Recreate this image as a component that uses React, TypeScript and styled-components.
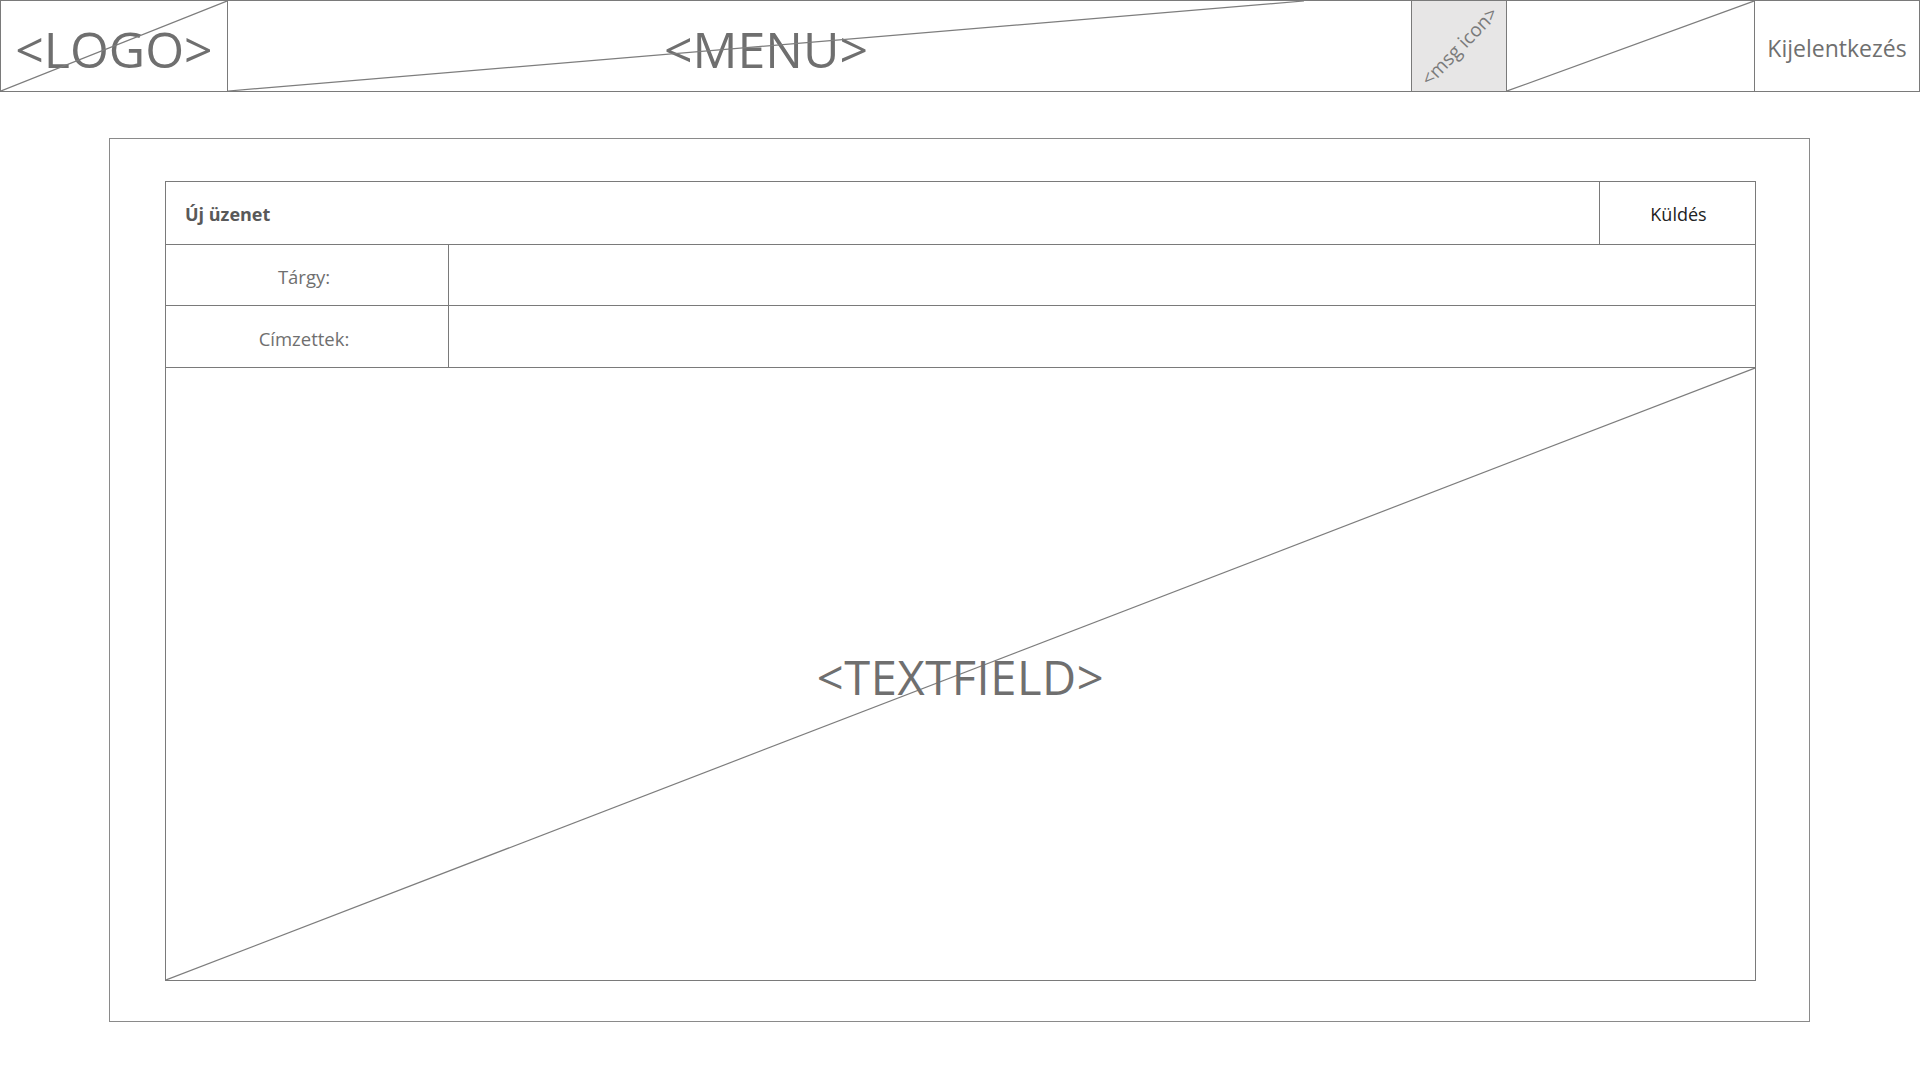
import React from 'react';
import styled, { createGlobalStyle } from 'styled-components';

const GlobalStyle = createGlobalStyle`
  html, body {
    margin: 0;
    padding: 0;
    background: #ffffff;
  }

  body {
    font-family: 'Open Sans', 'Noto Sans', 'Liberation Sans', sans-serif;
    color: #717171;
  }

  * {
    box-sizing: border-box;
  }
`;

const LINE = '#7a7a7a';

const Header = styled.header`
  display: flex;
  height: 92px;
  border: 1px solid ${LINE};
`;

const Cell = styled.div<{ width?: number; shade?: boolean }>`
  position: relative;
  display: flex;
  align-items: center;
  justify-content: center;
  flex: ${props => (props.width ? `0 0 ${props.width}px` : '1 1 auto')};
  border-left: 1px solid ${LINE};
  background: ${props => (props.shade ? '#e7e6e6' : 'transparent')};
  overflow: hidden;

  &:first-child {
    border-left: none;
  }
`;

const MenuArea = styled.div`
  display: flex;
  flex: 1 1 auto;
  align-self: stretch;
  border-left: 1px solid ${LINE};
`;

const Placeholder = styled.div<{ width?: number }>`
  position: relative;
  display: flex;
  align-items: center;
  justify-content: center;
  flex: ${props => (props.width ? `0 0 ${props.width}px` : '1 1 auto')};
`;

const Cross = styled.svg`
  position: absolute;
  inset: 0;
  width: 100%;
  height: 100%;
  pointer-events: none;
`;

const BigLabel = styled.span<{ size: number; spacing?: number }>`
  position: relative;
  top: 3px;
  font-size: ${props => props.size}px;
  line-height: 1;
  color: #6f6f6f;
  letter-spacing: ${props => props.spacing ?? 0}px;
`;

const MsgLabel = styled.span`
  font-size: 19px;
  color: #7a7a7a;
  transform: rotate(-46deg);
  white-space: nowrap;
`;

const LogoutText = styled.span`
  position: relative;
  top: 2px;
  font-size: 23px;
  color: #6f6f6f;
`;

const Main = styled.main`
  padding: 46px 110px 0 109px;
`;

const Frame = styled.section`
  height: 884px;
  border: 1px solid #8a8a8a;
  padding: 42px 53px 40px 55px;
`;

const Form = styled.div`
  display: flex;
  flex-direction: column;
  height: 100%;
  border: 1px solid ${LINE};
`;

const Row = styled.div<{ height: number }>`
  display: flex;
  flex: 0 0 ${props => props.height}px;
  border-bottom: 1px solid ${LINE};
`;

const Title = styled.div`
  flex: 1 1 auto;
  display: flex;
  align-items: center;
  padding: 2px 0 0 19px;
  font-size: 18px;
  font-weight: 700;
  color: #595959;
`;

const SendButton = styled.button`
  flex: 0 0 156px;
  padding: 2px 0 0 2px;
  border: none;
  border-left: 1px solid ${LINE};
  background: transparent;
  font-family: inherit;
  font-size: 18px;
  color: #222222;
  cursor: pointer;
`;

const FieldLabel = styled.div`
  flex: 0 0 283px;
  display: flex;
  align-items: center;
  justify-content: center;
  padding: 3px 6px 0 0;
  font-size: 18.5px;
  color: #6f6f6f;
  border-right: 1px solid ${LINE};
`;

const FieldInput = styled.div`
  flex: 1 1 auto;
`;

const TextArea = styled.div`
  position: relative;
  flex: 1 1 auto;
  display: flex;
  align-items: center;
  justify-content: center;
`;

const Diagonal: React.FC = () => (
  <Cross preserveAspectRatio="none" viewBox="0 0 100 100">
    <line
      x1="0"
      y1="100"
      x2="100"
      y2="0"
      stroke="#7d7d7d"
      strokeWidth="1.2"
      vectorEffect="non-scaling-stroke"
    />
  </Cross>
);

const App: React.FC = () => {
  return (
    <>
      <GlobalStyle />
      <Header>
        <Cell width={226}>
          <BigLabel size={50}>&lt;LOGO&gt;</BigLabel>
          <Diagonal />
        </Cell>
        <MenuArea>
          <Placeholder width={1076}>
            <BigLabel size={50}>&lt;MENU&gt;</BigLabel>
            <Diagonal />
          </Placeholder>
          <Placeholder />
        </MenuArea>
        <Cell width={95} shade>
          <MsgLabel>&lt;msg icon&gt;</MsgLabel>
        </Cell>
        <Cell width={248}>
          <Diagonal />
        </Cell>
        <Cell width={165}>
          <LogoutText>Kijelentkezés</LogoutText>
        </Cell>
      </Header>

      <Main>
        <Frame>
          <Form>
            <Row height={63}>
              <Title>Új üzenet</Title>
              <SendButton>Küldés</SendButton>
            </Row>
            <Row height={61}>
              <FieldLabel>Tárgy:</FieldLabel>
              <FieldInput />
            </Row>
            <Row height={62}>
              <FieldLabel>Címzettek:</FieldLabel>
              <FieldInput />
            </Row>
            <TextArea>
              <Diagonal />
              <BigLabel size={47} spacing={0.6}>&lt;TEXTFIELD&gt;</BigLabel>
            </TextArea>
          </Form>
        </Frame>
      </Main>
    </>
  );
};

export default App;
